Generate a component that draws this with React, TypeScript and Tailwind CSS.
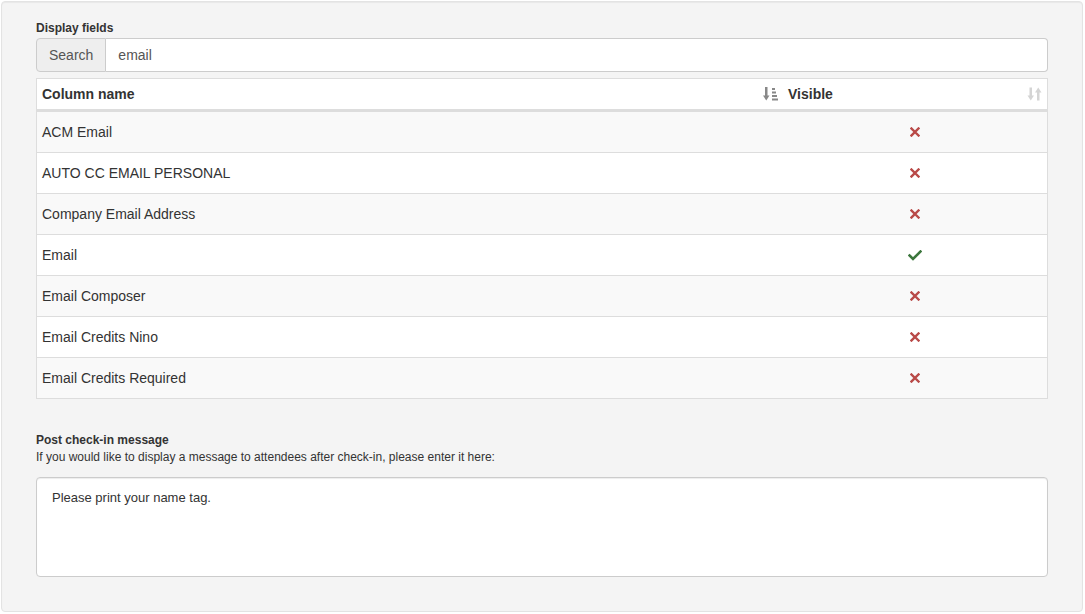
import React from "react";

const rows = [
  { name: "ACM Email", visible: false },
  { name: "AUTO CC EMAIL PERSONAL", visible: false },
  { name: "Company Email Address", visible: false },
  { name: "Email", visible: true },
  { name: "Email Composer", visible: false },
  { name: "Email Credits Nino", visible: false },
  { name: "Email Credits Required", visible: false },
];

function SortAttrIcon() {
  return (
    <svg width="15" height="14" viewBox="0 0 15 14" className="text-[#888]">
      <rect x="2" y="0" width="2.5" height="9" fill="currentColor" />
      <polygon points="0,8.5 6.5,8.5 3.25,13.5" fill="currentColor" />
      <rect x="9" y="1" width="3" height="2" fill="currentColor" />
      <rect x="9" y="4.5" width="4" height="2" fill="currentColor" />
      <rect x="9" y="8" width="5" height="2" fill="currentColor" />
      <rect x="9" y="11.5" width="6" height="2" fill="currentColor" />
    </svg>
  );
}

function SortIcon() {
  return (
    <svg width="15" height="14" viewBox="0 0 15 14" className="text-[#d4d4d4]">
      <rect x="2.5" y="0.5" width="2.5" height="9" fill="currentColor" />
      <polygon points="0.5,8.5 7,8.5 3.75,13.5" fill="currentColor" />
      <rect x="10" y="4.5" width="2.5" height="9" fill="currentColor" />
      <polygon points="8,5.5 14.5,5.5 11.25,0.5" fill="currentColor" />
    </svg>
  );
}

function Cross() {
  return (
    <svg width="10" height="10" viewBox="0 0 10 10">
      <path d="M1.5 1.5 L8.5 8.5 M8.5 1.5 L1.5 8.5" stroke="#b94a48" strokeWidth="2.4" strokeLinecap="square" />
    </svg>
  );
}

function Check() {
  return (
    <svg width="14" height="11" viewBox="0 0 14 11">
      <path d="M1.5 5.5 L5 9 L12.5 1.5" stroke="#3c763d" strokeWidth="2.6" fill="none" strokeLinecap="square" />
    </svg>
  );
}

export default function App() {
  return (
    <div className="bg-white min-h-[614px] pt-px pl-px font-['Liberation_Sans',Arial,sans-serif] text-[#333]">
      <div className="w-[1082px] bg-[#f4f4f4] border border-[#e3e3e3] rounded-[4px] shadow-[inset_0_1px_1px_rgba(0,0,0,0.05)] px-[34px] pt-[18px] pb-[34px]">
        {/* Display fields */}
        <label className="block text-[12px] leading-[17px] font-bold mb-px">Display fields</label>
        <div className="flex h-[34px] text-[14px] leading-5">
          <span className="flex items-center px-3 bg-[#eee] border border-[#ccc] rounded-l-[4px] text-[#555]">Search</span>
          <div className="flex-1 flex items-center px-3 bg-white border border-l-0 border-[#ccc] rounded-r-[4px] text-[#555]">email</div>
        </div>

        <div className="mt-[6px] border border-[#ddd] bg-white text-[14px] leading-5">
          <div className="grid grid-cols-[1fr_264px] border-b-2 border-[#ddd]">
            <div className="flex items-center justify-between px-[5px] py-[5px] font-bold">
              <span>Column name</span>
              <SortAttrIcon />
            </div>
            <div className="flex items-center justify-between px-[5px] py-[5px] font-bold">
              <span>Visible</span>
              <SortIcon />
            </div>
          </div>
          {rows.map((r, i) => (
            <div
              key={r.name}
              className={`grid grid-cols-[1fr_264px] h-[41px] border-t border-[#ddd] ${i % 2 === 0 ? "bg-[#f9f9f9]" : "bg-white"}`}
            >
              <div className="flex items-center px-[5px]">{r.name}</div>
              <div className="flex items-center justify-center">{r.visible ? <Check /> : <Cross />}</div>
            </div>
          ))}
        </div>

        {/* Post check-in message */}
        <label className="block mt-[33px] text-[12px] leading-[17px] font-bold">Post check-in message</label>
        <p className="text-[12px] leading-[17px]">
          If you would like to display a message to attendees after check-in, please enter it here:
        </p>
        <div className="mt-[11px] h-[100px] bg-white border border-[#ccc] rounded-[4px] shadow-[inset_0_1px_1px_rgba(0,0,0,0.075)] px-[15px] pt-[10px] text-[13px] leading-5">
          Please print your name tag.
        </div>
      </div>
    </div>
  );
}
